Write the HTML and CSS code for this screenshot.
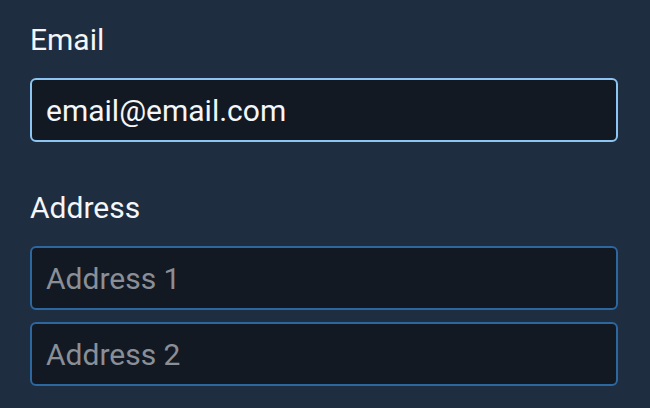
FILE: index.html
```html
<!DOCTYPE html>
<html lang="en">
<head>
<meta charset="utf-8">
<link rel="stylesheet" href="styles.css">
</head>
<body>
<form class="form">
  <div class="field">
    <label class="label" for="email">Email</label>
    <input class="input input-active" id="email" type="email" value="email@email.com">
  </div>
  <div class="field">
    <label class="label" for="addr1">Address</label>
    <div class="stack">
      <input class="input" id="addr1" type="text" placeholder="Address 1">
      <input class="input" id="addr2" type="text" placeholder="Address 2">
    </div>
  </div>
</form>
</body>
</html>
```

FILE: styles.css
```css
html, body {
  margin: 0;
  padding: 0;
  background: #1e2d40;
  height: 100%;
}
body {
  font-family: Roboto, "Liberation Sans", sans-serif;
  color: #f4f6f9;
}
.form {
  display: flex;
  flex-direction: column;
  gap: 43px;
  padding: 17px 32px 0 30px;
}
.field {
  display: flex;
  flex-direction: column;
}
.label {
  font-size: 30px;
  line-height: 45px;
  margin-bottom: 16px;
  color: #f4f6f9;
}
.stack {
  display: flex;
  flex-direction: column;
  gap: 12px;
}
.input {
  box-sizing: border-box;
  height: 64px;
  width: 100%;
  margin: 0;
  padding: 0 14px;
  border: 2px solid #2d679f;
  border-radius: 6px;
  background: #131923;
  color: #f4f6f9;
  font-family: Roboto, "Liberation Sans", sans-serif;
  font-size: 30px;
  outline: none;
}
.input::placeholder {
  color: #8a8f97;
  opacity: 1;
}
.input-active {
  border-color: #8cc4f2;
}
```
